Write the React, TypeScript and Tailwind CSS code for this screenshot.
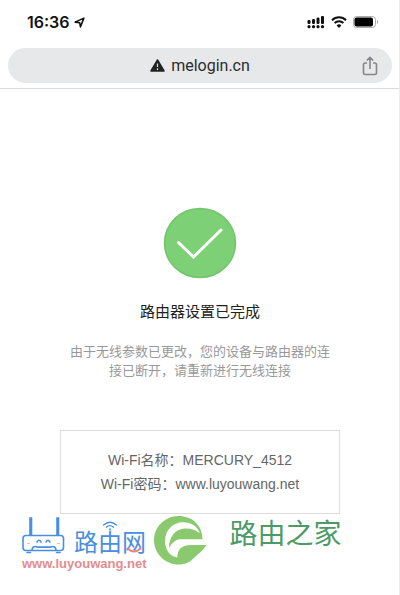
import type { ReactNode } from 'react';

const StatusBar = () => {
  return (
    <div className="flex h-11 items-center justify-between pr-5 pl-[27px] text-[#111]">
      <div className="flex items-center gap-1">
        <span className="font-['Inter',sans-serif] text-base font-semibold">
          16:36
        </span>
        <svg className="h-[11px] w-[11px]" viewBox="0 0 12 12" fill="none">
          <path
            d="M1.2 5.6 10.8 1.2 7 10.8 6.2 6.2Z"
            stroke="currentColor"
            strokeWidth="1.7"
            strokeLinejoin="round"
          />
        </svg>
      </div>

      <div className="flex items-center gap-[6px]">
        <svg className="h-[13px] w-[18px]" viewBox="0 0 18 13" fill="#111">
          <rect x="0.5" y="4" width="3" height="4" rx="1.2" />
          <rect x="5" y="3" width="3" height="5" rx="1.2" />
          <rect x="9.5" y="1.5" width="3" height="6.5" rx="1.2" />
          <rect x="14" y="0" width="3" height="8" rx="1" />
          <circle cx="2" cy="10.7" r="1.6" />
          <circle cx="6.5" cy="10.7" r="1.6" />
          <circle cx="11" cy="10.7" r="1.6" />
          <circle cx="15.5" cy="10.7" r="1.6" />
        </svg>
        <svg className="h-3 w-4" viewBox="0 0 16 12" fill="none">
          <path
            d="M1 4.2a10 10 0 0 1 14 0M3.6 7a6.3 6.3 0 0 1 8.8 0"
            stroke="#111"
            strokeWidth="2"
          />
          <path d="M8 12 5.6 9.5a3.4 3.4 0 0 1 4.8 0Z" fill="#111" />
        </svg>
        <svg className="h-3 w-[26px]" viewBox="0 0 26 12" fill="none">
          <rect x="0.5" y="0.5" width="22" height="11" rx="3" stroke="#aaa" />
          <rect x="1.5" y="1.5" width="18.5" height="9" rx="2" fill="#000" />
          <path d="M24 4v4c1.6-.5 1.6-3.5 0-4Z" fill="#aaa" />
        </svg>
      </div>
    </div>
  );
};

const AddressBar = () => {
  return (
    <div className="border-b border-[#dcdcdd] pt-1 pr-[7px] pb-[5px] pl-2">
      <div className="grid h-[35px] grid-cols-[32px_1fr_32px] items-center rounded-full bg-[#e7e8ea] px-[6px]">
        <div className="col-start-2 flex items-center justify-center gap-[6px] text-[#2c2d30]">
          <svg className="h-[13px] w-[15px]" viewBox="0 0 15 13">
            <path
              d="M7.5 1 14 12H1Z"
              fill="#222"
              stroke="#222"
              strokeWidth="1.5"
              strokeLinejoin="round"
            />
            <path d="M7.5 4.5v3.5M7.5 9.3v1.6" stroke="#ddd" strokeWidth="1.2" />
          </svg>
          <span className="font-['Roboto',sans-serif] text-base">melogin.cn</span>
        </div>
        <button type="button" aria-label="Share" className="justify-self-center text-[#85868b]">
          <svg className="h-5 w-4" viewBox="0 0 16 20" fill="none">
            <path
              d="M5 7H3.2Q1.5 7 1.5 8.7v8.1Q1.5 18.5 3.2 18.5h9.6q1.7 0 1.7-1.7V8.7Q14.5 7 12.8 7H11M8 13V1.5M4.8 4.5 8 1.3l3.2 3.2"
              stroke="currentColor"
              strokeWidth="1.6"
            />
          </svg>
        </button>
      </div>
    </div>
  );
};

const SuccessIcon = () => {
  return (
    <svg className="h-[72px] w-[74px]" viewBox="0 0 74 72" fill="none">
      <ellipse cx="37" cy="36" rx="35.5" ry="34.5" fill="#7ed077" stroke="#73c46d" strokeWidth="1.5" />
      <path d="M15.5 35.5 30.5 50 58 23" stroke="#fff" strokeWidth="3" strokeLinecap="round" />
    </svg>
  );
};

interface WifiRowProps {
  label: string;
  children: ReactNode;
}
const WifiRow = ({ label, children }: WifiRowProps) => {
  return (
    <div className="flex">
      <dt>Wi-Fi{label}：</dt>
      <dd>{children}</dd>
    </div>
  );
};

const RouterIcon = () => {
  return (
    <svg
      className="h-10 w-[43px]"
      viewBox="0 0 43 40"
      fill="none"
      stroke="currentColor"
      strokeWidth="1.6"
      strokeLinecap="round"
    >
      <rect x="1" y="20.5" width="40.5" height="15" rx="3" />
      <path d="M8 20V3h1.5v17M35 20V3h1.5v17" />
      <path d="M5 37.5h3.5M34.5 37.5H38" />
      <path d="M15 27q2-3.5 4 0M24 27q2-3.5 4 0" />
      <path d="M10 35q.5-3.5 3-3.5 1.5 0 2.5.6h13q1-.6 2.5-.6 2.5 0 3 3.5" />
      <path d="M5.5 28.5h2M35.5 28.5h2" stroke="#f3b5b0" strokeWidth="1" />
    </svg>
  );
};

const LuyouwangLogo = () => {
  return (
    <div className="text-[#4a8ee0]">
      <div className="flex h-[41px] items-end gap-[9px]">
        <RouterIcon />
        <div className="relative font-['Noto_Sans_CJK_SC',sans-serif] text-2xl leading-7">
          路由网
          <svg
            className="absolute -top-[6px] left-7 h-[9px] w-4"
            viewBox="0 0 16 9"
            fill="none"
            stroke="currentColor"
            strokeWidth="1.3"
            strokeLinecap="round"
          >
            <path d="M1.5 4q6.500-5.500 13 0M4.500 6.200q3.500-3 7 0M7.300 8.200h1.400" />
          </svg>
          <svg
            className="absolute right-1 bottom-[2px] h-[6px] w-4"
            viewBox="0 0 16 6"
            fill="none"
            stroke="#e87f85"
            strokeWidth="1.8"
            strokeLinecap="round"
          >
            <path d="M1.5 1.500q6.500 6 13 0" />
          </svg>
        </div>
      </div>
      <p className="font-['Liberation_Sans',sans-serif] text-[13px] leading-[18px] font-bold text-[#e58b8e]">
        www.luyouwang.net
      </p>
    </div>
  );
};

const LuyouzhijiaLogo = () => {
  return (
    <div className="flex gap-[22px] pt-[2px]">
      <svg className="h-[49px] w-[53px]" viewBox="0 0 53 49">
        <path
          d="M48.5 23.3C48.5 9 38 0 24.5 0 11 0 0 11 0 24.2S11 48.5 24.5 48.5c6.5 0 11-2 15.5-6.5 5-5 8-6 12.5-13Z"
          fill="#8bc96e"
        />
        <path
          d="M23.3 41.5C15 40 11 33 11 25 11 14 19 6.3 29 6.3c8.5 0 15 4.5 16.7 11C42 14 37 12.3 31 12.5 21 13 15 21 15 32c3-5 6-8.2 11-8.7h22.500L52.5 29H37c-9 0-13.5 4-13.7 12.5Z"
          fill="#fff"
        />
      </svg>
      <span className="font-['Noto_Sans_CJK_SC',sans-serif] text-[28px] leading-8 text-[#4d9a67]">
        路由之家
      </span>
    </div>
  );
};

export default function App() {
  return (
    <div className="min-h-screen border-r border-[#ececec] bg-white font-['Liberation_Sans','Noto_Sans_CJK_SC',sans-serif]">
      <StatusBar />
      <AddressBar />
      <main className="flex flex-col items-center pt-[118px] pr-[59px] pl-[60px]">
        <SuccessIcon />
        <h1 className="mt-[21px] text-[15px] leading-6 text-[#222]">路由器设置已完成</h1>
        <p className="mt-[18px] px-2 text-center text-[13px] leading-[19px] text-[#999]">
          由于无线参数已更改，您的设备与路由器的连接已断开，请重新进行无线连接
        </p>
        <dl className="mt-[50px] flex w-full flex-col items-center border border-[#ddd] py-[17px] text-sm leading-6 text-[#666]">
          <WifiRow label="名称">MERCURY_4512</WifiRow>
          <WifiRow label="密码">www.luyouwang.net</WifiRow>
        </dl>
      </main>
      <footer className="flex gap-2 pl-[22px]">
        <LuyouwangLogo />
        <LuyouzhijiaLogo />
      </footer>
    </div>
  );
}
